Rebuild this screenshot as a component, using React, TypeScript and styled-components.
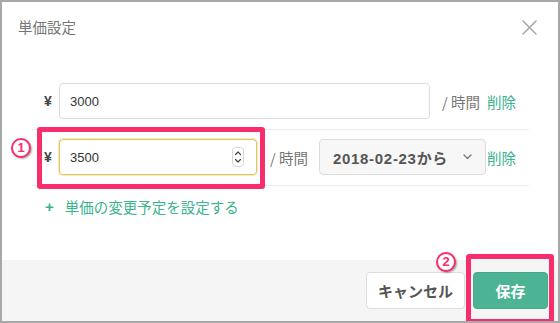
import React from 'react';
import styled, { createGlobalStyle } from 'styled-components';

const Global = createGlobalStyle`
  html, body { margin: 0; padding: 0; background: #fff; }
  body { font-family: "Liberation Sans", "Noto Sans CJK JP", sans-serif; }
  * { box-sizing: border-box; }
`;

const PINK = '#f92d6c';
const GREEN = '#3bb38e';

const Frame = styled.div`
  position: relative;
  width: 560px;
  height: 323px;
  border: 2px solid #a8a8a8;
  background: #fff;
  display: flex;
  flex-direction: column;
  overflow: hidden;
`;

const Header = styled.div`
  height: 52px;
  padding: 15px 21px 0 16px;
  display: flex;
  justify-content: space-between;
  align-items: flex-start;
`;

const Title = styled.h2`
  margin: 0;
  font-family: "Noto Sans CJK JP", sans-serif;
  font-size: 14.5px;
  line-height: 20px;
  font-weight: 400;
  color: #777;
`;

const CloseButton = styled.button`
  width: 16px;
  height: 16px;
  margin-top: 2px;
  padding: 0;
  border: 0;
  background: none;
  display: flex;
  align-items: center;
  justify-content: center;
`;

const Body = styled.div`
  flex: 1;
  padding: 20px 29px 0 30px;
  display: flex;
  flex-direction: column;
`;

const Row = styled.div`
  display: flex;
  align-items: center;
  padding: 9px 13px 10px 12px;
  border-bottom: 1px solid #ececec;
`;

const Yen = styled.span`
  width: 15px;
  flex: 0 0 15px;
  font-size: 14px;
  font-weight: 700;
  color: #444;
`;

const InputBox = styled.div<{ $width?: number; $focused?: boolean }>`
  ${p => (p.$width ? `flex: 0 0 ${p.$width}px;` : 'flex: 1;')}
  height: 36px;
  border: 1px solid ${p => (p.$focused ? '#e6c55e' : '#dcdcdc')};
  border-radius: 4px;
  ${p => (p.$focused ? 'box-shadow: 0 0 0 1px rgba(238, 214, 140, 0.55);' : '')}
  padding: 0 12px 0 10px;
  display: flex;
  align-items: center;
  justify-content: space-between;
  font-size: 13px;
  color: #333;
  background: #fff;
`;

const Unit = styled.span<{ $ml: number; $mr: number }>`
  margin: 0 ${p => p.$mr}px 0 ${p => p.$ml}px;
  font-family: "Noto Sans CJK JP", sans-serif;
  font-size: 14.5px;
  color: #777;
  white-space: nowrap;
`;

const SelectBox = styled.div`
  flex: 0 0 167px;
  height: 36px;
  border: 1px solid #dcdcdc;
  border-radius: 4px;
  background: #f7f7f7;
  padding: 0 13px 0 13px;
  display: flex;
  align-items: center;
  justify-content: space-between;
  font-family: "Liberation Sans", "Noto Sans CJK JP", sans-serif;
  font-size: 15px;
  font-weight: 700;
  letter-spacing: 0.7px;
  color: #555;
  white-space: nowrap;
`;

const Delete = styled.button<{ $ml: number }>`
  flex: 0 0 29px;
  margin-left: ${p => p.$ml}px;
  padding: 0;
  border: 0;
  background: none;
  font-family: "Noto Sans CJK JP", sans-serif;
  font-size: 14.5px;
  color: ${GREEN};
  white-space: nowrap;
  text-align: left;
`;

const AddLink = styled.a`
  margin: 11px 0 0 13px;
  display: flex;
  align-items: center;
  gap: 11px;
  font-family: "Noto Sans CJK JP", sans-serif;
  font-size: 14.5px;
  line-height: 20px;
  color: ${GREEN};
  text-decoration: none;
`;

const Plus = styled.span`
  font-family: "Liberation Sans", sans-serif;
  font-size: 15px;
  font-weight: 700;
`;

const Footer = styled.div`
  height: 61px;
  background: #f5f5f5;
  display: flex;
  justify-content: flex-end;
  align-items: center;
  gap: 8px;
  padding-right: 10px;
`;

const Button = styled.button<{ $primary?: boolean; $width: number }>`
  width: ${p => p.$width}px;
  height: 37px;
  border-radius: 4px;
  border: 1px solid ${p => (p.$primary ? '#46a98a' : '#dddddd')};
  background: ${p => (p.$primary ? '#4cb394' : '#fff')};
  color: ${p => (p.$primary ? '#fff' : '#555')};
  font-family: "Noto Sans CJK JP", sans-serif;
  font-size: 15px;
  font-weight: 700;
  padding: 0;
`;

const Highlight = styled.div<{ $l: number; $t: number; $w: number; $h: number }>`
  position: absolute;
  left: ${p => p.$l}px;
  top: ${p => p.$t}px;
  width: ${p => p.$w}px;
  height: ${p => p.$h}px;
  border: 5px solid ${PINK};
  border-radius: 3px;
  pointer-events: none;
`;

const Badge = styled.span<{ $l: number; $t: number }>`
  position: absolute;
  left: ${p => p.$l}px;
  top: ${p => p.$t}px;
  width: 20px;
  height: 20px;
  border-radius: 50%;
  border: 2px solid ${PINK};
  background: #fff;
  color: ${PINK};
  font-family: "Liberation Sans", sans-serif;
  font-size: 13px;
  font-weight: 700;
  line-height: 16px;
  text-align: center;
  box-shadow: 1px 1px 2px rgba(0, 0, 0, 0.35);
`;

const CloseIcon = () => (
  <svg width="15" height="15" viewBox="0 0 15 15">
    <path d="M1 1 L14 14 M14 1 L1 14" stroke="#a9a9a9" strokeWidth="1.6" strokeLinecap="round" />
  </svg>
);

const Spinner = () => (
  <svg width="12" height="20" viewBox="0 0 12 20">
    <rect x="0.5" y="0.5" width="11" height="19" rx="3" fill="none" stroke="#d6d6d6" />
    <path d="M3.5 7.5 L6 5 L8.5 7.5" stroke="#444" strokeWidth="1.2" fill="none" strokeLinecap="round" strokeLinejoin="round" />
    <path d="M3.5 12.5 L6 15 L8.5 12.5" stroke="#444" strokeWidth="1.2" fill="none" strokeLinecap="round" strokeLinejoin="round" />
  </svg>
);

const Chevron = () => (
  <svg width="9" height="6" viewBox="0 0 9 6">
    <path d="M1 1 L4.5 4.5 L8 1" stroke="#777" strokeWidth="1.3" fill="none" strokeLinecap="round" strokeLinejoin="round" />
  </svg>
);

export default function App() {
  return (
    <>
      <Global />
      <Frame>
        <Header>
          <Title>単価設定</Title>
          <CloseButton aria-label="close">
            <CloseIcon />
          </CloseButton>
        </Header>
        <Body>
          <Row>
            <Yen>¥</Yen>
            <InputBox>3000</InputBox>
            <Unit $ml={12} $mr={7}>/ 時間</Unit>
            <Delete $ml={0}>削除</Delete>
          </Row>
          <Row>
            <Yen>¥</Yen>
            <InputBox $width={198} $focused>
              <span>3500</span>
              <Spinner />
            </InputBox>
            <Unit $ml={13} $mr={11}>/ 時間</Unit>
            <SelectBox>
              <span>2018-02-23から</span>
              <Chevron />
            </SelectBox>
            <Delete $ml={1}>削除</Delete>
          </Row>
          <AddLink href="#">
            <Plus>+</Plus>
            <span>単価の変更予定を設定する</span>
          </AddLink>
        </Body>
        <Footer>
          <Button $width={99}>キャンセル</Button>
          <Button $width={75} $primary>保存</Button>
        </Footer>
        <Highlight $l={35} $t={125} $w={228} $h={62} />
        <Highlight $l={464} $t={252} $w={88} $h={70} />
        <Badge $l={9} $t={136}>1</Badge>
        <Badge $l={434} $t={250}>2</Badge>
      </Frame>
    </>
  );
}
